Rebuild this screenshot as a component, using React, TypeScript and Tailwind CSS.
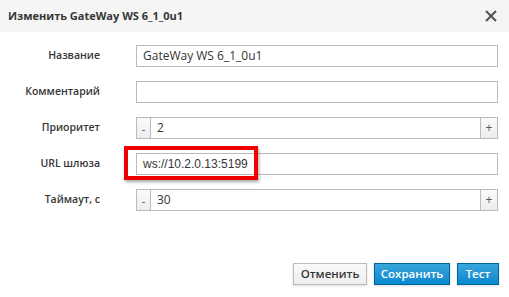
import React from "react";

const font = { fontFamily: '"Open Sans", "Noto Sans", sans-serif' };

const Label = ({ children }: { children: React.ReactNode }) => (
  <div className="w-[100px] shrink-0 text-right text-[10.5px] font-semibold text-[#363636]">
    {children}
  </div>
);

const TextInput = ({ value, url }: { value?: string; url?: boolean }) => (
  <div
    className={
      "flex h-[22px] flex-1 items-center border border-[#bbbbbb] bg-white px-[6px] text-[#363636] " +
      (url ? "font-['Liberation_Sans',Arial,sans-serif] text-[12px]" : "text-[12px]")
    }
  >
    {value}
  </div>
);

const Spinner = ({ value }: { value: string }) => (
  <div className="flex h-[22px] flex-1">
    <button className="flex w-[15px] items-center justify-center border border-[#bbbbbb] bg-gradient-to-b from-[#fafafa] to-[#ededed] text-[11px] leading-none text-[#4d5258]">
      -
    </button>
    <div className="flex flex-1 items-center border-y border-[#bbbbbb] bg-white px-[6px] text-[12px] text-[#363636]">
      {value}
    </div>
    <button className="flex w-[18px] items-center justify-center border border-[#bbbbbb] bg-gradient-to-b from-[#fafafa] to-[#ededed] text-[12px] leading-none text-[#4d5258]">
      +
    </button>
  </div>
);

export default function App() {
  return (
    <div className="h-[297px] w-[509px] overflow-hidden bg-white" style={font}>
      <div className="flex h-8 items-center justify-between bg-[#f5f5f5] pl-2 pr-[12px]">
        <h1 className="text-[11px] font-bold text-[#363636]">Изменить GateWay WS 6_1_0u1</h1>
        <svg width="12" height="12" viewBox="0 0 12 12" className="text-[#4d5258]">
          <path d="M1 1 L11 11 M11 1 L1 11" stroke="currentColor" strokeWidth="2" />
        </svg>
      </div>

      <div className="relative flex flex-col gap-[14px] pr-[11px] pt-[13px]">
        <div className="flex items-center gap-[36px]">
          <Label>Название</Label>
          <TextInput value="GateWay WS 6_1_0u1" />
        </div>
        <div className="flex items-center gap-[36px]">
          <Label>Комментарий</Label>
          <TextInput />
        </div>
        <div className="flex items-center gap-[36px]">
          <Label>Приоритет</Label>
          <Spinner value="2" />
        </div>
        <div className="flex items-center gap-[36px]">
          <Label>URL шлюза</Label>
          <TextInput value="ws://10.2.0.13:5199" url />
        </div>
        <div className="flex items-center gap-[36px]">
          <Label>Таймаут, с</Label>
          <Spinner value="30" />
        </div>

        <div className="pointer-events-none absolute left-[124px] top-[114px] h-[34px] w-[134px] border-[4px] border-[#ee0000] shadow-[1px_2px_3px_rgba(0,0,0,0.35)]" />
      </div>

      <div className="mt-[52px] flex justify-end gap-[7px] pr-[10px]">
        <button className="h-[22px] w-[74px] border border-[#bbbbbb] bg-gradient-to-b from-[#fafafa] to-[#ededed] text-[11.5px] font-semibold text-[#363636] shadow-[0_1px_2px_rgba(0,0,0,0.15)]">
          Отменить
        </button>
        <button className="h-[22px] w-[76px] border border-[#00659c] bg-gradient-to-b from-[#39a5dc] to-[#0088ce] text-[11.5px] font-semibold text-white shadow-[0_1px_2px_rgba(0,0,0,0.15)]">
          Сохранить
        </button>
        <button className="h-[22px] w-[42px] border border-[#00659c] bg-gradient-to-b from-[#39a5dc] to-[#0088ce] text-[11.5px] font-semibold text-white shadow-[0_1px_2px_rgba(0,0,0,0.15)]">
          Тест
        </button>
      </div>
    </div>
  );
}
